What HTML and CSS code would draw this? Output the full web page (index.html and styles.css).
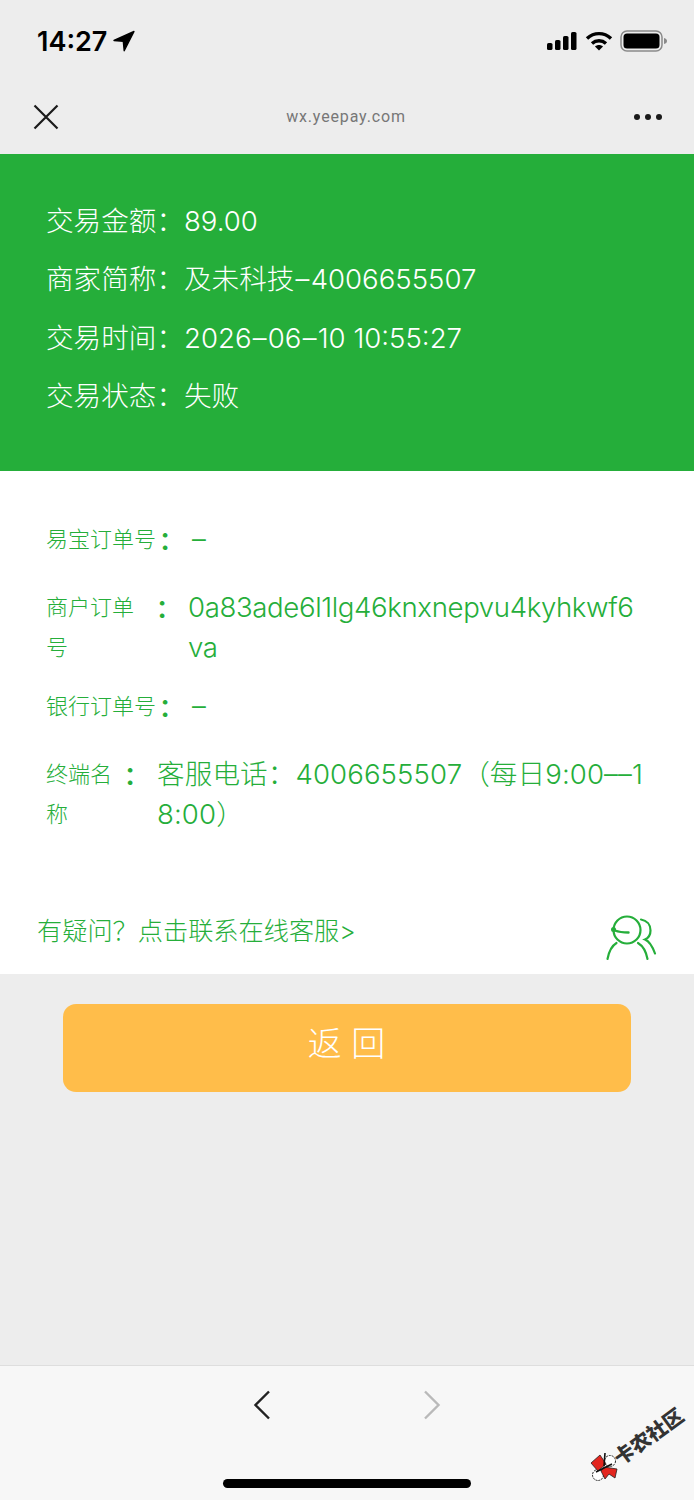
FILE: index.html
```html
<!DOCTYPE html>
<html lang="zh-CN">
<head>
<meta charset="utf-8">
<title>交易详情</title>
<link rel="stylesheet" href="styles.css">
</head>
<body>
<div class="page">
  <header class="chrome">
    <div class="status">
      <div class="time">14:27
        <svg class="loc" width="22" height="22" viewBox="0 0 22 22"><path d="M21 1.5 1 10.5l9.3.7.9 9.6z" fill="#000" stroke="#000" stroke-width="1.4" stroke-linejoin="round"/></svg>
      </div>
      <div class="status-icons">
        <svg width="32" height="18" viewBox="0 0 32 18"><rect x="1" y="11" width="5.5" height="7" rx="1.6"/><rect x="9" y="8" width="5.5" height="10" rx="1.6"/><rect x="17" y="4" width="5.5" height="14" rx="1.6"/><rect x="25" y="0" width="5.5" height="18" rx="1.6"/></svg>
        <svg width="28" height="20" viewBox="0 0 28 20" fill="none" stroke="#000" stroke-width="3.4"><path d="M2 7.5C9 1 19 1 26 7.5"/><path d="M7 12.5c4-3.6 10-3.6 14 0"/><path d="M14 19.5l-4-4c2.2-2 5.800-2 8 0z" fill="#000" stroke="none"/></svg>
        <svg width="48" height="22" viewBox="0 0 48 22"><rect x="1" y="1" width="41" height="20" rx="6" fill="none" stroke="#8a8a8a" stroke-width="1.500"/><rect x="3.500" y="3.500" width="36" height="15" rx="3.500"/><path d="M44 8c2 .5 3 1.500 3 3s-1 2.500-3 3z" fill="#8a8a8a"/></svg>
      </div>
    </div>
    <nav class="nav">
      <svg class="close" width="26" height="26" viewBox="0 0 26 26" fill="none" stroke="#1a1a1a" stroke-width="2.200"><path d="M1.500 1.500l23 23M24.500 1.500l-23 23"/></svg>
      <div class="host">wx.yeepay.com</div>
      <svg class="more" width="30" height="8" viewBox="0 0 30 8" fill="#1a1a1a"><circle cx="4" cy="4" r="3"/><circle cx="15" cy="4" r="3"/><circle cx="26" cy="4" r="3"/></svg>
    </nav>
  </header>

  <section class="summary">
    <div class="summary-row">交易金额：89.00</div>
    <div class="summary-row">商家简称：及未科技<span class="dash">–</span>4006655507</div>
    <div class="summary-row">交易时间：2026<span class="dash">–</span>06<span class="dash">–</span>10 10:55:27</div>
    <div class="summary-row">交易状态：失败</div>
  </section>

  <section class="details">
    <div class="row">
      <div class="label label-full">易宝订单号</div>
      <div class="colon colon-near">:</div>
      <div class="value value-dash">–</div>
    </div>
    <div class="row">
      <div class="label label-4">商户订单号</div>
      <div class="colon colon-merchant">:</div>
      <div class="value value-merchant">0a83ade6l1lg46knxnepvu4kyhkwf6va</div>
    </div>
    <div class="row row-tight">
      <div class="label label-full">银行订单号</div>
      <div class="colon colon-near">:</div>
      <div class="value value-dash">–</div>
    </div>
    <div class="row">
      <div class="label label-3">终端名称</div>
      <div class="colon colon-terminal">:</div>
      <div class="value value-terminal">客服电话：4006655507（每日9:00––18:00）</div>
    </div>
    <div class="help">
      <span class="help-text">有疑问？点击联系在线客服&gt;</span>
      <svg class="agent" width="54" height="48" viewBox="0 0 54 48" fill="none" stroke="#25ae3a" stroke-width="2.200" stroke-linecap="round">
        <circle cx="21" cy="16" r="13.500"/>
        <path d="M9 16.500c5 2 9 2 13.500 2" stroke-width="2.400"/>
        <circle cx="7.500" cy="15.500" r="2.500" fill="#25ae3a" stroke="none"/>
        <path d="M1.500 45c1.500-8 4-13 9-16"/>
        <path d="M32 29c5 3 8 8 9.500 16"/>
        <path d="M35 5.500c6 1 9.500 5.500 9.500 11 0 4-2 7.500-5.500 9 5 2 7.500 7 10 14"/>
      </svg>
    </div>
  </section>

  <main class="lower">
    <button class="back" type="button">返 回</button>
  </main>

  <footer class="toolbar">
    <div class="arrows">
      <svg width="18" height="30" viewBox="0 0 18 30" fill="none" stroke="#222" stroke-width="2.400"><path d="M16 1.500 2.500 15 16 28.500"/></svg>
      <svg width="18" height="30" viewBox="0 0 18 30" fill="none" stroke="#b9b9b9" stroke-width="2.400"><path d="M2 1.500 15.500 15 2 28.500"/></svg>
    </div>
    <div class="home-bar"></div>
  </footer>

  <div class="watermark">
    <svg class="wm-logo" width="28" height="30" viewBox="0 0 28 30">
      <circle cx="20" cy="9" r="5.500" fill="#fff" stroke="#222" stroke-width="1" stroke-dasharray="2 1"/>
      <circle cx="8" cy="23" r="5.500" fill="#fff" stroke="#222" stroke-width="1" stroke-dasharray="2 1"/>
      <path d="M1 11l9-8 6 9-8 7z" fill="#e3261f" stroke="#222" stroke-width=".8"/>
      <path d="M14 15l13 2-2 9-6-4-4 5-4-8z" fill="#e3261f" stroke="#222" stroke-width=".8"/>
      <path d="M15 1l-1 13M6 20l16-8" stroke="#111" stroke-width="1.600"/>
    </svg>
    <span class="wm-text">卡农社区</span>
  </div>
</div>
</body>
</html>
```
FILE: styles.css
```css
* { box-sizing: border-box; }
html, body { margin: 0; padding: 0; }
body {
  font-family: Inter, "Noto Sans CJK SC", sans-serif;
  font-weight: 300;
  background: #ededed;
}
.page {
  position: relative;
  width: 694px;
  height: 1500px;
  display: flex;
  flex-direction: column;
  overflow: hidden;
  background: #ededed;
}
.chrome { height: 154px; background: #ededed; display: flex; flex-direction: column; }
.status {
  height: 80px;
  padding: 2px 26px 0 37px;
  display: flex;
  align-items: center;
  justify-content: space-between;
}
.time {
  font-family: Inter, sans-serif;
  font-size: 27px;
  font-weight: 600;
  color: #000;
  display: flex;
  align-items: center;
  gap: 6px;
}
.status-icons { display: flex; align-items: center; gap: 7px; }
.nav {
  flex: 1;
  display: flex;
  align-items: center;
  justify-content: space-between;
  padding: 0 31px 0 33px;
}
.host {
  font-family: Roboto, sans-serif;
  font-size: 16px;
  font-weight: 400;
  letter-spacing: .85px;
  color: #777;
  margin-top: -2px;
}
.summary {
  height: 317px;
  background: #25ae3a;
  color: #fff;
  padding: 38px 0 0 46px;
}
.summary-row {
  font-size: 27.600px;
  line-height: 58.400px;
  white-space: nowrap;
}
.dash { margin: 0 1.250px; }
.details {
  height: 503px;
  background: #fff;
  color: #25ae3a;
  padding: 48px 0 0 46px;
}
.row { display: flex; margin-bottom: 28px; line-height: 40px; }
.row-tight { margin-top: -9px; }
.label { font-size: 22px; flex: none; }
.label-full { width: 110px; }
.label-4 { width: 92px; }
.label-3 { width: 70px; }
.colon { font-size: 32px; font-weight: 500; flex: none; text-align: center; }
.colon-near { width: 18px; margin-right: 18px; }
.colon-merchant { width: 48px; }
.colon-terminal { width: 28px; margin-right: 13px; }
.value { font-size: 27.600px; word-break: break-all; }
.value-dash { width: 40px; }
.value-merchant { width: 455px; margin-left: 2px; letter-spacing: -.37px; }
.value-terminal { width: 492px; letter-spacing: .1px; }
.help {
  display: flex;
  align-items: center;
  justify-content: space-between;
  margin: 77px 34px 0 -9px;
}
.help-text { font-size: 25.200px; margin-bottom: 17px; }
.lower { flex: 1; padding: 30px 63px 0; }
.back {
  display: block;
  width: 568px;
  height: 88px;
  padding: 0 0 14px;
  border: 0;
  border-radius: 13px;
  background: #ffbd4a;
  color: #fff;
  font-family: "Noto Sans CJK SC", sans-serif;
  font-size: 34px;
  font-weight: 300;
  letter-spacing: 1px;
}
.toolbar {
  height: 135px;
  background: #f7f7f7;
  border-top: 1px solid #dedede;
  display: flex;
  flex-direction: column;
  align-items: center;
}
.arrows {
  display: flex;
  justify-content: space-between;
  width: 188px;
  margin: 24px 0 0;
}
.home-bar {
  width: 248px;
  height: 9px;
  border-radius: 5px;
  background: #000;
  margin: 59px 0 0;
}
.watermark {
  position: absolute;
  left: 590px;
  top: 1452px;
  display: flex;
  align-items: center;
  transform: rotate(-36deg);
  transform-origin: 14px 15px;
  white-space: nowrap;
}
.wm-logo { transform: rotate(36deg); flex: none; }
.wm-text {
  font-family: "Noto Sans CJK SC", sans-serif;
  font-size: 20px;
  font-weight: 900;
  color: #333;
}
```
